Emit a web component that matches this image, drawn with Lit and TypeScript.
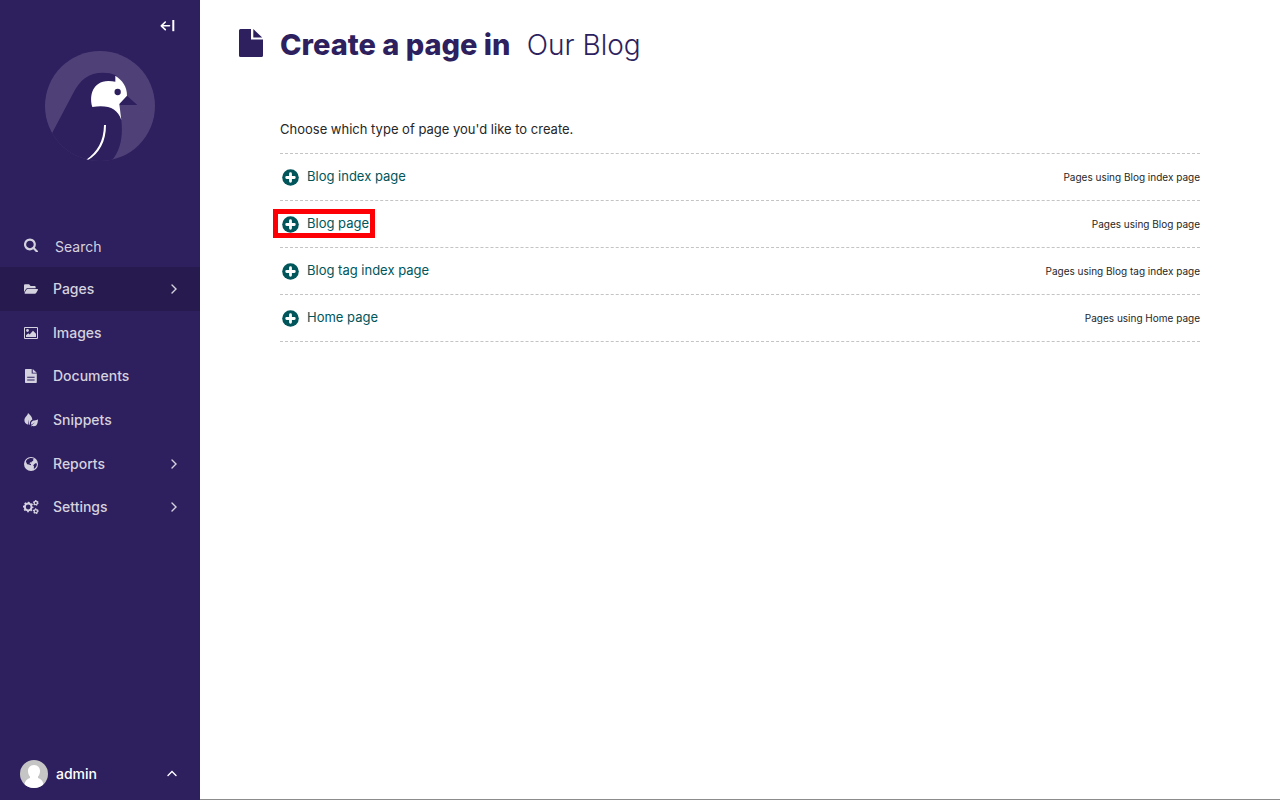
import { LitElement, html, svg, css } from "lit";
import { customElement } from "lit/decorators.js";

const gear = (cx: number, cy: number, r: number, teeth: number, w: number) => {
  const mid = r - w / 2;
  const dash = (2 * Math.PI * r) / teeth / 2;
  return svg`
    <circle cx=${cx} cy=${cy} r=${mid} fill="none" stroke="currentColor" stroke-width=${w}></circle>
    <circle cx=${cx} cy=${cy} r=${r} fill="none" stroke="currentColor" stroke-width=${w * 0.9}
      stroke-dasharray="${dash} ${dash}" stroke-dashoffset=${dash / 2}></circle>`;
};

const icons = {
  search: html`<svg class="icon" viewBox="0 0 1664 1664" aria-hidden="true"><path transform="translate(-64 -64)" d="M1216 832q0-185-131.500-316.500t-316.500-131.500-316.500 131.500-131.500 316.500 131.500 316.500 316.500 131.500 316.500-131.500 131.500-316.500zm512 832q0 52-38 90t-90 38q-54 0-90-38l-343-342q-179 124-399 124-143 0-273.500-55.500t-225-150-150-225-55.500-273.500 55.500-273.500 150-225 225-150 273.500-55.500 273.500 55.500 225 150 150 225 55.500 273.500q0 220-124 399l343 343q37 37 37 90z"/></svg>`,
  folder: html`<svg class="icon" viewBox="0 0 576 512" aria-hidden="true"><path d="M572.694 292.093L500.270 416.248A63.997 63.997 0 0 1 444.989 448H45.025c-18.523 0-30.064-20.093-20.731-36.093l72.424-124.155A64 64 0 0 1 152 256h399.964c18.523 0 30.064 20.093 20.730 36.093zM152 224h328v-48c0-26.510-21.490-48-48-48H272l-64-64H48C21.490 64 0 85.490 0 112v278.046l69.077-118.418C86.214 242.250 117.989 224 152 224z"/></svg>`,
  image: html`<svg class="icon" viewBox="0 0 14 14" aria-hidden="true"><path fill-rule="evenodd" d="M1 1h12a1 1 0 0 1 1 1v10a1 1 0 0 1-1 1H1a1 1 0 0 1-1-1V2a1 1 0 0 1 1-1zM1 2v10h12V2z"/><circle cx="3.500" cy="4.500" r="1.400"/><path d="M2 11V9.300L4.300 7.200 5.600 8.400 9 4.700 12 7.800V11z"/></svg>`,
  doc: html`<svg class="icon" viewBox="0 0 14 14" aria-hidden="true"><path fill-rule="evenodd" d="M1.700 0H7.700V4.600H12.800V13.300a.7.7 0 0 1-.7.7H1.700a.7.7 0 0 1-.7-.7V.7a.7.7 0 0 1 .7-.7zM3.200 7.700V8.700H10.600V7.700zM3.200 10.600V11.600H10.600V10.600z"/><path d="M8.700 0L12.800 3.700H8.700z"/></svg>`,
  leaf: html`<svg class="icon" viewBox="0 0 14 14" aria-hidden="true"><path d="M4 0C6.200 1.900 8.500 4.200 8.300 6.800 6.300 7.600 5.600 9.400 6 11.400L5.200 11.800 4.500 6.500 4.300 11.700C-.3 10.400-.6 6 2.200 3.200 3.200 2.200 3.900 1.200 4 0z"/><path d="M14 6.300C13.800 9.800 13.300 13.400 9.700 13.300 8.800 13.300 8.200 12.900 7.900 12.800L7.300 13.500 6.900 12.900 11.300 9.200 7.300 11.700C6.400 9.200 8.200 7.500 10.500 7.400 12 7.300 13.200 7.100 14 6.300z"/></svg>`,
  globe: html`<svg class="icon" viewBox="0 0 14 14" aria-hidden="true"><circle cx="7" cy="7" r="7"/><path class="hole" d="M5.500 1.200C7.500.8 9.200 1.100 10.200 1.900L8.800 2.600 9.400 3.700 7.800 4.400 7.300 5.600 6.100 5.200 5.500 6.400 7 7 6.800 8.300 4.900 7.500 3.200 7.200 2.300 5.600 1.900 4.200C2.700 2.700 3.900 1.600 5.500 1.200zM11.300 6.200L12.900 6.500C13 8.400 12.300 10 10.800 11.500L9.700 11.600 10 9.400 9.200 8.300z"/></svg>`,
  cogs: html`<svg class="icon wide" viewBox="0 0 16 14" aria-hidden="true">${gear(5.200, 7, 4.400, 8, 2)}${gear(12.800, 2.900, 2.300, 6, 1.300)}${gear(12.800, 11.200, 2.300, 6, 1.300)}</svg>`,
  chevron: html`<svg class="chevron" viewBox="0 0 10 10" aria-hidden="true"><path d="M4 1L8 5L4 9"/></svg>`,
  up: html`<svg class="chevron" viewBox="0 0 10 10" aria-hidden="true"><path d="M1 6.500L5 2.500L9 6.500"/></svg>`,
  plus: html`<svg class="plus" viewBox="0 0 17 17" aria-hidden="true"><circle cx="8.500" cy="8.500" r="8.300" fill="currentColor"/><path d="M8.500 4.700V12.300M4.700 8.500H12.300" stroke="#fff" stroke-width="2.800" stroke-linecap="round"/></svg>`,
};

@customElement("app-root")
export class AppRoot extends LitElement {
  static styles = css`
    :host {
      display: flex;
      min-height: 100vh;
      font-family: Inter, "Open Sans", sans-serif;
      background: #fff;
      color: #262626;
    }
    * { box-sizing: border-box; }
    a { text-decoration: none; color: inherit; }
    button { font: inherit; color: inherit; background: none; border: 0; padding: 0; cursor: pointer; }
    .sidebar {
      flex: 0 0 200px;
      display: flex;
      flex-direction: column;
      background: #2e1f5e;
      color: #d5d2df;
      font-size: 14px;
      font-weight: 500;
      line-height: 22px;
    }
    .collapse {
      display: flex;
      align-self: flex-end;
      margin: 18px 25px 0 0;
      color: #fff;
    }
    .collapse svg { width: 15px; height: 15px; }
    .brand { align-self: center; margin-top: 18px; }
    .brand svg { display: block; width: 110px; height: 110px; }
    .search {
      display: flex;
      align-items: center;
      gap: 10px;
      padding: 0 23px;
      margin-top: 62px;
      height: 44px;
    }
    .search button { display: flex; }
    .search input {
      width: 0;
      min-width: 0;
      flex: 1;
      margin-top: 4px;
      padding: 0 0 0 6px;
      border: 0;
      background: none;
      color: inherit;
      font: inherit;
      font-weight: 400;
      outline: none;
    }
    .search input::placeholder { color: inherit; opacity: 1; }
    .menu { list-style: none; margin: 0; padding: 0; line-height: 1.55; }
    .item {
      display: flex;
      align-items: center;
      padding: 11px 22px 11px 23px;
    }
    .item.active { background: #261a4e; }
    .item .label { flex: 1; padding-left: 14px; }
    .icon { display: block; flex: none; width: 14px; height: 14px; margin: 0 1px; fill: currentColor; }
    .icon.wide { width: 16px; margin: 0; }
    .hole { fill: #2e1f5e; }
    .chevron { width: 10px; height: 10px; fill: none; stroke: currentColor; stroke-width: 1.400; flex: none; stroke-linecap: round; }
    .account {
      display: flex;
      align-items: center;
      gap: 8px;
      margin-top: auto;
      padding: 12px 23px 12px 20px;
      color: #fff;
      text-align: left;
    }
    .account .name { flex: 1; }
    .avatar { width: 28px; height: 28px; display: block; }
    main { flex: 1; min-width: 0; border-bottom: 1px solid #8c8c8c; }
    header {
      display: flex;
      align-items: center;
      padding: 25px 40px 0 39px;
      color: #2e1f5e;
    }
    .page-icon { width: 24px; height: 28px; margin: 0 17px 4px 0; fill: currentColor; }
    h1 { margin: 0; font-size: 29px; line-height: 40px; font-weight: 800; }
    h1 .parent { font-size: 28px; font-weight: 350; margin-left: 10px; }
    .content { padding: 54px 80px 40px; }
    .intro { margin: 0; font-size: 13px; line-height: 20px; padding-bottom: 14px; }
    .types { list-style: none; margin: 0; padding: 0; border-top: 1px dashed #c4c4c4; }
    .type {
      display: flex;
      align-items: center;
      justify-content: space-between;
      padding: 13px 0 14px;
      border-bottom: 1px dashed #c4c4c4;
    }
    .type a {
      display: flex;
      align-items: center;
      gap: 8px;
      height: 19px;
      margin-left: -2px;
      padding: 0 1px 0 4px;
      color: #00565b;
      font-size: 13px;
      line-height: 18px;
    }
    .type a.marked { outline: 5px solid #fd0006; }
    .type a span { margin-bottom: 1px; }
    .plus { width: 17px; height: 17px; margin-top: 1px; }
    .using { font-size: 10px; line-height: 18px; margin-top: 1px; }
  `;

  private menu = [
    { label: "Pages", icon: icons.folder, sub: true, active: true },
    { label: "Images", icon: icons.image },
    { label: "Documents", icon: icons.doc },
    { label: "Snippets", icon: icons.leaf },
    { label: "Reports", icon: icons.globe, sub: true },
    { label: "Settings", icon: icons.cogs, sub: true },
  ];

  private types = [
    { name: "Blog index page" },
    { name: "Blog page", marked: true },
    { name: "Blog tag index page" },
    { name: "Home page" },
  ];

  render() {
    return html`
      <aside class="sidebar">
        <button class="collapse" aria-label="Toggle sidebar">
          <svg viewBox="0 0 15 15" fill="none" stroke="currentColor" stroke-width="1.600" stroke-linecap="round" stroke-linejoin="round"><path d="M5.300 4L1.300 7.800L5.300 11.600M1.500 7.800H9.500"/><path d="M13.300 2V13.200" stroke-width="2" stroke-linecap="butt"/></svg>
        </button>
        <a class="brand" href="#" aria-label="Dashboard">
          <svg viewBox="45 153 330 330">
            <defs><clipPath id="disc"><circle cx="210" cy="318" r="165"/></clipPath></defs>
            <circle cx="210" cy="318" r="165" fill="#4f4177"/>
            <g clip-path="url(#disc)">
              <path fill="#2e1f5e" d="M66 400L131 277C150 240 175 218 220 218C234 218 246 220 258 226L291 287L322 315H268L274 358C279 410 273 450 243 484H40z"/>
              <path fill="#fff" d="M187 321C177 288 187 244 235 243Q247 243 256 245V227C276 240 292 260 291 287L268 312L274 360C262 325 235 314 187 321z"/>
              <circle cx="263" cy="276" r="9.500" fill="#2e1f5e"/>
              <path fill="#fff" d="M222 375H228C228 425 208 460 173 481L168 480C203 455 221 424 222 375z"/>
            </g>
          </svg>
        </a>
        <form class="search" role="search">
          <button type="button" aria-label="Search">${icons.search}</button>
          <input type="text" placeholder="Search" aria-label="Search" />
        </form>
        <nav>
          <ul class="menu">
            ${this.menu.map(
              (m) => html`<li><a class="item ${m.active ? "active" : ""}" href="#">${m.icon}<span class="label">${m.label}</span>${m.sub ? icons.chevron : ""}</a></li>`
            )}
          </ul>
        </nav>
        <button class="account">
          <svg class="avatar" viewBox="0 0 28 28" aria-hidden="true">
            <defs><clipPath id="face"><circle cx="14" cy="14" r="14"/></clipPath></defs>
            <g clip-path="url(#face)"><path fill="#c5c5c5" d="M0 0h28v28H0z"/><path fill="#fff" d="M14 5C18 5 20.300 8 20 11.500C19.800 14 19 15.500 18 16.500V18C21 19 23.500 20.500 24 28H4C4.500 20.500 7 19 10 18V16.500C9 15.500 8.200 14 8 11.500C7.700 8 10 5 14 5z"/></g>
          </svg>
          <span class="name">admin</span>
          ${icons.up}
        </button>
      </aside>
      <main>
        <header>
          <svg class="page-icon" viewBox="0 0 24 28" aria-hidden="true"><path d="M1.500 0H12V10.500H24V26.500a1.500 1.500 0 0 1-1.500 1.500H1.500A1.500 1.500 0 0 1 0 26.500V1.500A1.500 1.500 0 0 1 1.500 0z"/><path d="M14.300 0L23.200 8.500H14.300z"/></svg>
          <h1>Create a page in <span class="parent">Our Blog</span></h1>
        </header>
        <section class="content">
          <p class="intro">Choose which type of page you'd like to create.</p>
          <ul class="types">
            ${this.types.map(
              (t) => html`<li class="type">
                <a class=${t.marked ? "marked" : ""} href="#">${icons.plus}<span>${t.name}</span></a>
                <span class="using">Pages using ${t.name}</span>
              </li>`
            )}
          </ul>
        </section>
      </main>
    `;
  }
}
